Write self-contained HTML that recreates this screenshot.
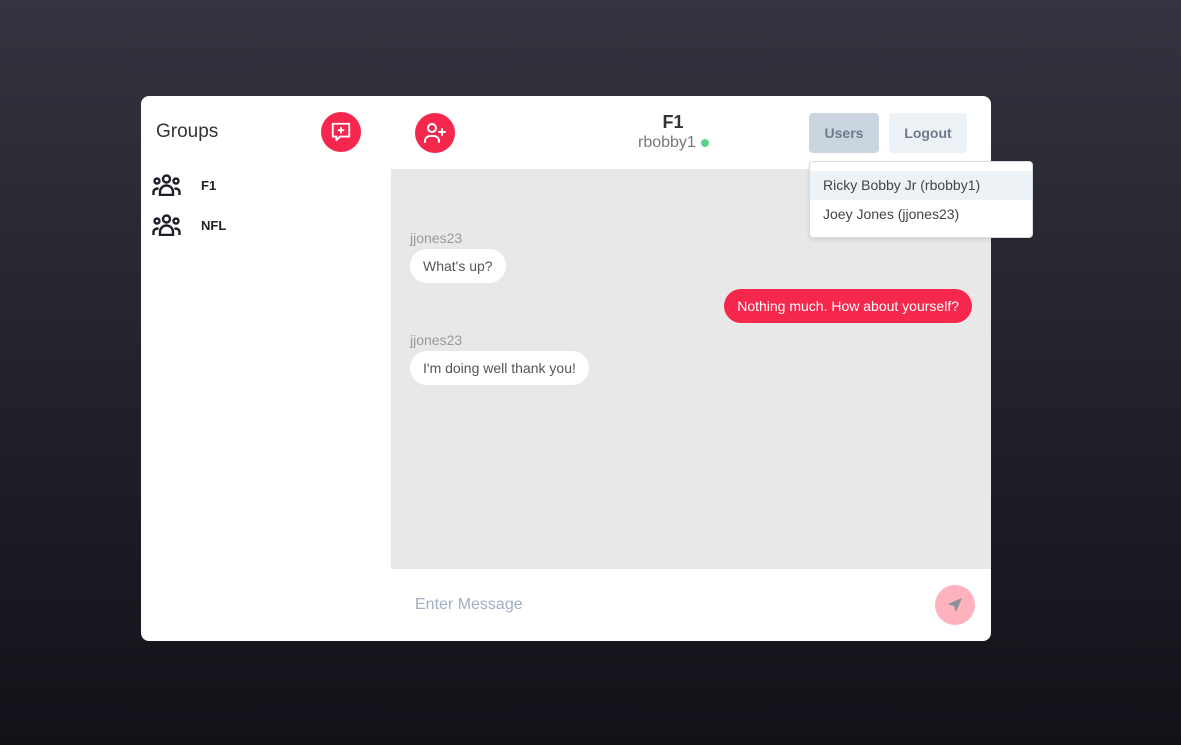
<!DOCTYPE html>
<html><head><style>
*{box-sizing:border-box;margin:0;padding:0}
body{width:1181px;height:745px;background:linear-gradient(#34333f,#121118);font-family:"Liberation Sans",sans-serif;position:relative;overflow:hidden}
.card{position:absolute;left:141px;top:96px;width:850px;height:545px;background:#fff;border-radius:8px;overflow:hidden}
.abs{position:absolute}
.circ{position:absolute;width:40px;height:40px;border-radius:50%;background:#f5274d;display:flex;align-items:center;justify-content:center}
.chat{position:absolute;left:250px;top:73px;width:600px;height:400px;background:#e8e8e8}
.name{position:absolute;font-size:14px;color:#9a9a9a}
.bub{position:absolute;height:34px;line-height:34px;padding:0 13px;border-radius:17px;font-size:14px;background:#fff;color:#555}
.btn{position:absolute;top:17px;height:40px;border-radius:4px;font-size:14px;font-weight:bold;color:#707a8a;text-align:center;line-height:40px}
</style></head><body>
<div class="card">
 <div class="abs" style="left:15px;top:25px;font-size:19px;color:#333">Groups</div>
 <div class="circ" style="left:180px;top:16px"><svg width="22" height="22" viewBox="0 0 24 24" fill="none" stroke="#fff" stroke-width="2" stroke-linejoin="round"><path d="M3 3h18v14H11l-4 4v-4H3z"/><path d="M12 6.5v7M8.5 10h7"/></svg></div>
 <div class="circ" style="left:274px;top:17px"><svg width="24" height="24" viewBox="0 0 24 24" fill="none" stroke="#fff" stroke-width="2" stroke-linecap="round"><circle cx="9" cy="7" r="4"/><path d="M2 21v-1a5 5 0 0 1 5-5h4a5 5 0 0 1 5 5v1M19 8v6M16 11h6"/></svg></div>
 <svg class="abs" style="left:11px;top:78px" width="29" height="22" viewBox="0 0 29 22" fill="none" stroke="#1e1e28" stroke-width="2.4"><circle cx="14.5" cy="5" r="3.5"/><circle cx="5" cy="7" r="2.5"/><circle cx="24" cy="7" r="2.5"/><path d="M8 21v-3a6.5 6.5 0 0 1 13 0v3zM1.5 21v-3a3.5 3.5 0 0 1 5-3M27.5 21v-3a3.5 3.5 0 0 0-5-3"/></svg>
 <div class="abs" style="left:60px;top:82px;font-size:13px;font-weight:bold;color:#222">F1</div>
 <svg class="abs" style="left:11px;top:118px" width="29" height="22" viewBox="0 0 29 22" fill="none" stroke="#1e1e28" stroke-width="2.4"><circle cx="14.5" cy="5" r="3.5"/><circle cx="5" cy="7" r="2.5"/><circle cx="24" cy="7" r="2.5"/><path d="M8 21v-3a6.5 6.5 0 0 1 13 0v3zM1.5 21v-3a3.5 3.5 0 0 1 5-3M27.5 21v-3a3.5 3.5 0 0 0-5-3"/></svg>
 <div class="abs" style="left:60px;top:122px;font-size:13px;font-weight:bold;color:#222">NFL</div>
 <div class="abs" style="left:482px;top:16px;width:100px;text-align:center;font-size:18px;font-weight:bold;color:#333;transform:translateX(-50%);left:532px">F1</div>
 <div class="abs" style="left:497px;top:38px;font-size:16px;color:#777">rbobby1</div>
 <div class="abs" style="left:560px;top:43px;width:8px;height:8px;border-radius:50%;background:#5bd38a"></div>
 <div class="btn" style="left:668px;width:70px;background:#cbd5e0">Users</div>
 <div class="btn" style="left:748px;width:78px;background:#edf2f7">Logout</div>
 <div class="chat">
  <div class="name" style="left:19px;top:61px">jjones23</div>
  <div class="bub" style="left:19px;top:80px">What's up?</div>
  <div class="bub" style="right:19px;top:120px;background:#f5274d;color:#fff">Nothing much. How about yourself?</div>
  <div class="name" style="left:19px;top:163px">jjones23</div>
  <div class="bub" style="left:19px;top:182px">I'm doing well thank you!</div>
 </div>
 <div class="abs" style="left:274px;top:500px;font-size:16px;color:#a0aec0">Enter Message</div>
 <div class="circ" style="left:794px;top:489px;background:#feb2bd"><svg width="16" height="16" viewBox="0 0 16 16"><path d="M15 1L1 7l6 2 2 6z" fill="#8a8f99"/></svg></div>
</div>
<div class="abs" style="left:809px;top:161px;width:224px;height:77px;background:#fff;border:1px solid #d8dce3;border-radius:4px;box-shadow:0 2px 4px rgba(0,0,0,.1);font-size:14px;color:#444">
 <div style="margin-top:9px;height:29px;line-height:29px;padding-left:13px;background:#edf2f7">Ricky Bobby Jr (rbobby1)</div>
 <div style="height:29px;line-height:29px;padding-left:13px">Joey Jones (jjones23)</div>
</div>
</body></html>
